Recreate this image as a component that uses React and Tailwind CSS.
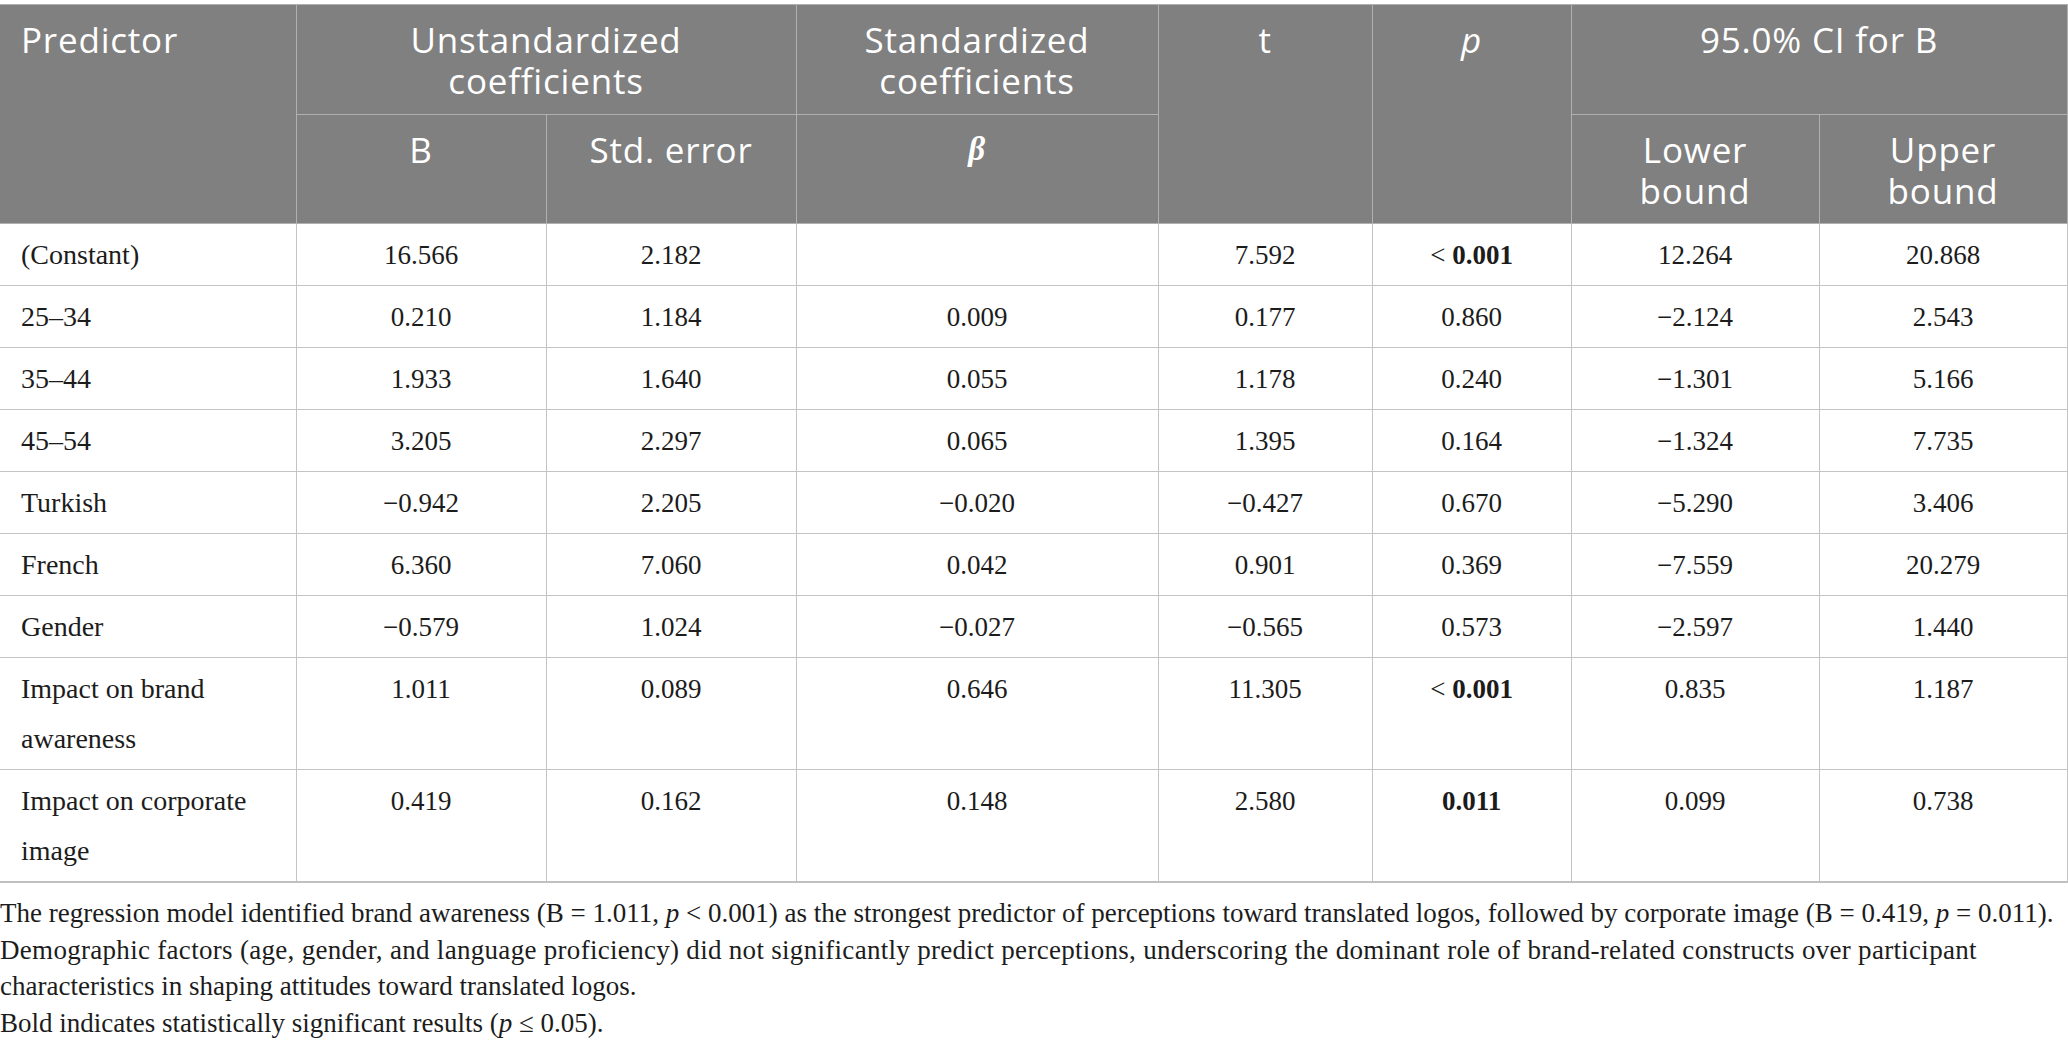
import React from 'react'

const rows = [
  { label: ['(Constant)'], b: '16.566', se: '2.182', beta: '', t: '7.592', p: ['< ', '0.001'], lo: '12.264', up: '20.868' },
  { label: ['25–34'], b: '0.210', se: '1.184', beta: '0.009', t: '0.177', p: ['0.860'], lo: '−2.124', up: '2.543' },
  { label: ['35–44'], b: '1.933', se: '1.640', beta: '0.055', t: '1.178', p: ['0.240'], lo: '−1.301', up: '5.166' },
  { label: ['45–54'], b: '3.205', se: '2.297', beta: '0.065', t: '1.395', p: ['0.164'], lo: '−1.324', up: '7.735' },
  { label: ['Turkish'], b: '−0.942', se: '2.205', beta: '−0.020', t: '−0.427', p: ['0.670'], lo: '−5.290', up: '3.406' },
  { label: ['French'], b: '6.360', se: '7.060', beta: '0.042', t: '0.901', p: ['0.369'], lo: '−7.559', up: '20.279' },
  { label: ['Gender'], b: '−0.579', se: '1.024', beta: '−0.027', t: '−0.565', p: ['0.573'], lo: '−2.597', up: '1.440' },
  { label: ['Impact on brand', 'awareness'], b: '1.011', se: '0.089', beta: '0.646', t: '11.305', p: ['< ', '0.001'], lo: '0.835', up: '1.187' },
  { label: ['Impact on corporate', 'image'], b: '0.419', se: '0.162', beta: '0.148', t: '2.580', p: ['', '0.011'], lo: '0.099', up: '0.738' },
]

// header cell + body cell styles
const th = "border border-[#b0b0b0] align-top pt-[14px] font-normal text-center"
const td = "border border-[#c4c4c4] align-top pt-[6px] pb-[5px] text-center"

const PValue = ({ p }) => {
  if (p.length === 1) return <span>{p[0]}</span>
  return (
    <span>
      {p[0]}
      <b className="font-bold">{p[1]}</b>
    </span>
  )
}

export default function App() {
  return (
    <div className="w-[2068px] bg-white pt-[4px]">
      <table className="table-fixed w-[2067px] border-collapse border-t border-t-[#c8c8c8]">
        <colgroup>
          <col className="w-[296px]" />
          <col className="w-[250px]" />
          <col className="w-[250px]" />
          <col className="w-[362px]" />
          <col className="w-[214px]" />
          <col className="w-[199px]" />
          <col className="w-[248px]" />
          <col className="w-[248px]" />
        </colgroup>
        <thead className="bg-[#7f807f] text-white font-['Open_Sans',sans-serif] text-[35px] leading-[41px] tracking-[0.8px]">
          <tr className="h-[110px]">
            <th rowSpan={2} className={th + " !text-left pl-[21px] border-l-0"}>Predictor</th>
            <th colSpan={2} className={th}>Unstandardized<br />coefficients</th>
            <th className={th}>Standardized<br />coefficients</th>
            <th rowSpan={2} className={th}>t</th>
            <th rowSpan={2} className={th + " italic"}>p</th>
            <th colSpan={2} className={th}>95.0% CI for B</th>
          </tr>
          <tr className="h-[109px]">
            <th className={th}>B</th>
            <th className={th}>Std. error</th>
            <th className={th + " font-['Liberation_Serif',serif] italic text-[33px]"}>
              <span className="font-bold">β</span>
            </th>
            <th className={th}>Lower<br />bound</th>
            <th className={th}>Upper<br />bound</th>
          </tr>
        </thead>
        <tbody className="font-['Liberation_Serif',serif] text-[27px] leading-[50px] text-[#1c1c1c]">
          {rows.map((r, i) => (
            <tr key={i} className={i === rows.length - 1 ? "border-b-2 border-b-[#c0c0c0]" : ""}>
              <td className={td + " !text-left pl-[21px] border-l-0 text-[28px]"}>
                {r.label.map((l, j) => (
                  <div key={j}>{l}</div>
                ))}
              </td>
              <td className={td}>{r.b}</td>
              <td className={td}>{r.se}</td>
              <td className={td}>{r.beta}</td>
              <td className={td}>{r.t}</td>
              <td className={td}><PValue p={r.p} /></td>
              <td className={td}>{r.lo}</td>
              <td className={td}>{r.up}</td>
            </tr>
          ))}
        </tbody>
      </table>

      {/* footnote */}
      <div className="mt-[12px] font-['Liberation_Serif',serif] text-[27px] leading-[36.5px] text-[#1c1c1c] whitespace-nowrap">
        <div>
          The regression model identified brand awareness (B = 1.011, <i>p</i> &lt; 0.001) as the strongest predictor of perceptions toward translated logos, followed by corporate image (B = 0.419, <i>p</i> = 0.011).
        </div>
        <div className="tracking-[0.3px]">
          Demographic factors (age, gender, and language proficiency) did not significantly predict perceptions, underscoring the dominant role of brand-related constructs over participant
        </div>
        <div>characteristics in shaping attitudes toward translated logos.</div>
        <div>
          Bold indicates statistically significant results (<i>p</i> ≤ 0.05).
        </div>
      </div>
    </div>
  )
}
